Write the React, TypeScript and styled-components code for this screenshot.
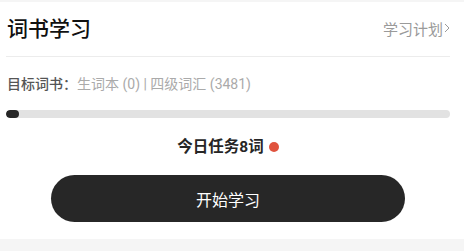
import styled, { createGlobalStyle } from "styled-components";

const GlobalStyle = createGlobalStyle`
  html, body {
    margin: 0;
    padding: 0;
    background: #f5f5f5;
    font-family: Roboto, "Noto Sans CJK SC", sans-serif;
  }
`;

const Card = styled.section`
  margin-top: 2px;
  background: #ffffff;
  padding: 0 14px 17px 6px;
  display: flex;
  flex-direction: column;
`;

const Header = styled.header`
  height: 54px;
  display: flex;
  align-items: center;
  justify-content: space-between;
  border-bottom: 1px solid #ececec;
`;

const Title = styled.h1`
  margin: 0 0 0 1px;
  font-size: 21px;
  font-weight: 500;
  color: #111111;
  line-height: 1;
`;

const PlanLink = styled.a`
  font-size: 15px;
  color: #9a9a9a;
  text-decoration: none;
  display: flex;
  align-items: center;
  gap: 1px;
  margin-bottom: 2px;
`;

const BookRow = styled.div`
  margin-top: 17px;
  margin-left: 1px;
  font-size: 14px;
  line-height: 20px;
  color: #aaaaaa;
  white-space: nowrap;
`;

const BookLabel = styled.span`
  color: #555555;
  font-weight: 500;
`;

const Track = styled.div`
  margin-top: 16px;
  height: 8px;
  border-radius: 4px;
  background: #e2e2e2;
  overflow: hidden;
`;

const Fill = styled.div`
  height: 100%;
  border-radius: 4px;
  background: #262626;
`;

const TaskRow = styled.div`
  margin-top: 19px;
  display: flex;
  justify-content: center;
  align-items: center;
  gap: 5px;
  line-height: 20px;
`;

const TaskText = styled.span`
  font-size: 15.5px;
  font-weight: 700;
  color: #262626;
`;

const Dot = styled.span`
  width: 10px;
  height: 10px;
  border-radius: 50%;
  background: #e0533e;
`;

const StartButton = styled.button`
  margin: 18px auto 0;
  width: 354px;
  height: 47px;
  border: none;
  border-radius: 24px;
  background: #272727;
  color: #ffffff;
  font-family: inherit;
  font-size: 16px;
  cursor: pointer;
`;

export default function App() {
  const progress = 3;
  return (
    <>
      <GlobalStyle />
      <Card>
        <Header>
          <Title>词书学习</Title>
          <PlanLink href="#">
            学习计划
            <svg width="6" height="10" viewBox="0 0 6 10">
              <path d="M1 1l4 4-4 4" fill="none" stroke="#9a9a9a" strokeWidth="1" />
            </svg>
          </PlanLink>
        </Header>
        <BookRow>
          <BookLabel>目标词书：</BookLabel>
          生词本 (0) | 四级词汇 (3481)
        </BookRow>
        <Track>
          <Fill style={{ width: `${progress}%` }} />
        </Track>
        <TaskRow>
          <TaskText>今日任务8词</TaskText>
          <Dot />
        </TaskRow>
        <StartButton>开始学习</StartButton>
      </Card>
    </>
  );
}
